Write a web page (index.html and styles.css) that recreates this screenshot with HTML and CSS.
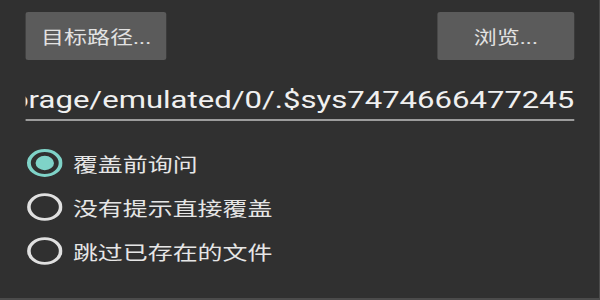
FILE: index.html
```html
<!DOCTYPE html>
<html lang="zh-CN">
<head>
    <meta charset="UTF-8">
    <meta name="viewport" content="width=device-width, initial-scale=1.0">
    <title>复制选项</title>
    <link rel="stylesheet" href="styles.css">
</head>
<body>

    <div class="frame">
        <div class="screen">

            <div class="toolbar">
                <button class="btn">目标路径...</button>
                <button class="btn">浏览...</button>
            </div>

            <div class="path-field">
                <span class="path-text">/storage/emulated/0/.$sys7474666477245</span>
            </div>

            <ul class="options">
                <li class="option checked">
                    <svg class="radio" viewBox="0 0 28 28" width="28" height="28">
                        <circle cx="14" cy="14" r="12.4" fill="none" stroke="#7fd3c8" stroke-width="3"/>
                        <circle cx="14" cy="14" r="7.2" fill="#7fd3c8"/>
                    </svg>
                    <span>覆盖前询问</span>
                </li>
                <li class="option">
                    <svg class="radio" viewBox="0 0 28 28" width="28" height="28">
                        <circle cx="14" cy="14" r="12.4" fill="none" stroke="#e0e0e0" stroke-width="2.8"/>
                    </svg>
                    <span>没有提示直接覆盖</span>
                </li>
                <li class="option">
                    <svg class="radio" viewBox="0 0 28 28" width="28" height="28">
                        <circle cx="14" cy="14" r="12.4" fill="none" stroke="#e0e0e0" stroke-width="2.8"/>
                    </svg>
                    <span>跳过已存在的文件</span>
                </li>
            </ul>

        </div>
    </div>

</body>
</html>
```

FILE: styles.css
```css
/* General Styling */
body {
    margin: 0;
    padding: 0;
    background: #303030;
    font-family: Roboto, "Noto Sans CJK SC", sans-serif;
    color: #e6e6e6;
    overflow: hidden;
}

.frame {
    width: 599px;
    height: 298px;
    border-right: 1px solid #4b4b4b;
    border-bottom: 2px solid #4b4b4b;
    overflow: hidden;
}

/* the screenshot is stretched sideways, so the content is too */
.screen {
    width: 469px;
    padding: 12px 20px 0;
    box-sizing: border-box;
    transform: scaleX(1.279);
    transform-origin: 0 0;
}

/* Buttons */
.toolbar {
    display: flex;
    justify-content: space-between;
}

.btn {
    min-width: 107px;
    height: 48px;
    padding: 0 12px;
    background: #5b5b5b;
    color: #e2e2e2;
    border: none;
    border-radius: 2px;
    font-family: Roboto, "Noto Sans CJK SC", sans-serif;
    font-size: 18px;
}

/* Path input */
.path-field {
    display: flex;
    justify-content: flex-end;
    overflow: hidden;
    margin-top: 25px;
    padding-bottom: 4px;
    border-bottom: 2px solid #9c9c9c;
}

.path-text {
    white-space: nowrap;
    font-size: 24.3px;
    line-height: 30px;
    color: #f0f0f0;
}

/* Radio list */
.options {
    list-style: none;
    margin: 20px 0 0;
    padding: 0 0 0 1px;
}

.option {
    display: flex;
    align-items: center;
    gap: 8px;
    height: 44px;
    font-size: 19.5px;
    color: #e6e6e6;
}

.radio {
    flex-shrink: 0;
}
```
